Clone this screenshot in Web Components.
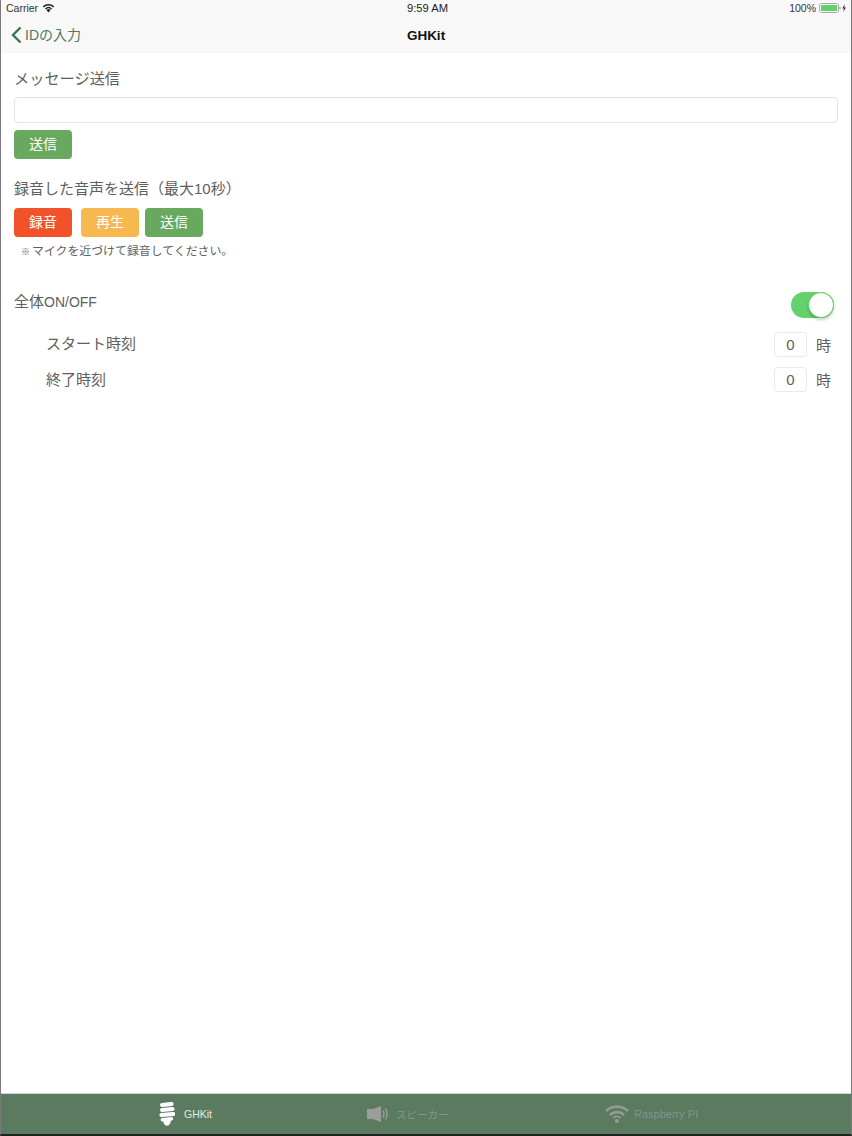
<!DOCTYPE html>
<html lang="ja">
<head>
<meta charset="utf-8">
<title>GHKit</title>
<style>
    html, body { margin: 0; padding: 0; background: #fff; }
    body { font-family: "Liberation Sans", "Noto Sans CJK JP", sans-serif; }
</style>
</head>
<body>
<app-shell>
    <nav-header back="IDの入力" title="GHKit"></nav-header>
    <section-title style="padding-top:15px">メッセージ送信</section-title>
    <text-field></text-field>
    <action-row style="margin-top:7px">
        <pill-button color="#68a85f">送信</pill-button>
    </action-row>
    <section-title style="padding-top:19px;font-size:15px">録音した音声を送信（最大10秒）</section-title>
    <action-row style="margin-top:8px">
        <pill-button color="#f2522a">録音</pill-button>
        <pill-button color="#f5b94f" style="margin-left:9px">再生</pill-button>
        <pill-button color="#68a85f" style="margin-left:6px">送信</pill-button>
    </action-row>
    <hint-text>マイクを近づけて録音してください。</hint-text>
    <switch-row><span style="font-size:15px">全体</span>ON/OFF</switch-row>
    <hour-row style="margin-top:14px;--label-lift:5px">スタート時刻</hour-row>
    <hour-row style="margin-top:10px">終了時刻</hour-row>
    <tab-bar slot="tabs"></tab-bar>
</app-shell>

<script>
class AppShell extends HTMLElement {
    constructor() {
        super();
        this.attachShadow({ mode: 'open' });
        this.shadowRoot.innerHTML = `
            <style>
                :host { display: block; width: 852px; height: 1136px; box-sizing: border-box;
                    border-left: 1px solid #77797a; border-right: 1px solid #77797a;
                    border-bottom: 2px solid #222; }
                .frame { display: flex; flex-direction: column; height: 100%; }
                .main { flex: 1; min-height: 0; }
            </style>
            <div class="frame">
                <div class="main"><slot></slot></div>
                <slot name="tabs"></slot>
            </div>
        `;
    }
}

class NavHeader extends HTMLElement {
    constructor() {
        super();
        this.attachShadow({ mode: 'open' });
    }
    connectedCallback() {
        this.shadowRoot.innerHTML = `
            <style>
                :host { display: block; background: #f8f8f8; height: 53px; color: #000; overflow: hidden; }
                .status { height: 15px; padding: 0 5px 0 5px; display: grid; grid-template-columns: 1fr auto 1fr;
                    align-items: center; font-size: 10.5px; color: #333; }
                .left, .right { display: flex; align-items: center; }
                .right { justify-content: flex-end; }
                .time { color: #222; font-size: 11.2px; margin-left: 3px; }
                .bar { display: grid; grid-template-columns: 1fr auto 1fr; align-items: center; height: 38px; padding-top: 1px; }
                .back { display: flex; align-items: center; color: #4f7a5c; font-size: 14px; padding-left: 10px; }
                .back svg { margin-right: 3px; }
                .back span { padding-bottom: 3px; }
                .title { font-size: 13.5px; font-weight: bold; color: #111; }
            </style>
            <div class="status">
                <div class="left">Carrier
                    <svg width="13" height="10" viewBox="0 0 13 10" style="margin-left:4px">
                        <path d="M6.5 9.5 L4.4 7 A3.2 3.2 0 0 1 8.6 7 Z" fill="#222"/>
                        <path d="M2.9 5.4 A5.4 5.4 0 0 1 10.1 5.4 L9.2 6.4 A4 4 0 0 0 3.8 6.4 Z" fill="#222"/>
                        <path d="M0.8 3.2 A8.4 8.4 0 0 1 12.2 3.2 L11.2 4.4 A6.8 6.8 0 0 0 1.8 4.4 Z" fill="#222"/>
                    </svg>
                </div>
                <div class="time">9:59 AM</div>
                <div class="right">100%
                    <svg width="27" height="10" viewBox="0 0 27 10" style="margin-left:3px">
                        <rect x="0.5" y="0.5" width="19" height="9" rx="2" fill="none" stroke="#aaa"/>
                        <rect x="2" y="2" width="16" height="6" fill="#5fd365"/>
                        <rect x="20.5" y="3.5" width="1" height="3" fill="#999"/>
                        <path d="M25.6 1 L23.4 5.4 H25 L24.4 9 L26.8 4.4 H25.2 Z" fill="#222"/>
                    </svg>
                </div>
            </div>
            <div class="bar">
                <div class="back">
                    <svg width="11" height="18" viewBox="0 0 11 18"><path d="M9.5 1.5 L2 9 L9.5 16.5" fill="none" stroke="#3f7350" stroke-width="2.4"/></svg>
                    <span>${this.getAttribute('back')}</span>
                </div>
                <div class="title">${this.getAttribute('title')}</div>
                <div></div>
            </div>
        `;
    }
}

class SectionTitle extends HTMLElement {
    constructor() {
        super();
        this.attachShadow({ mode: 'open' });
        this.shadowRoot.innerHTML = `
            <style>
                :host { display: block; padding-left: 13px; font-size: 15.2px; line-height: 22px; color: #606060; }
            </style>
            <slot></slot>
        `;
    }
}

class TextField extends HTMLElement {
    constructor() {
        super();
        this.attachShadow({ mode: 'open' });
        this.shadowRoot.innerHTML = `
            <style>
                :host { display: block; margin: 7px 13px 0 13px; }
                .box { height: 24px; border: 1px solid #e2e2e2; border-radius: 4px; background: #fff; }
            </style>
            <div class="box"></div>
        `;
    }
}

class ActionRow extends HTMLElement {
    constructor() {
        super();
        this.attachShadow({ mode: 'open' });
        this.shadowRoot.innerHTML = `
            <style>
                :host { display: flex; padding-left: 13px; }
            </style>
            <slot></slot>
        `;
    }
}

class PillButton extends HTMLElement {
    constructor() {
        super();
        this.attachShadow({ mode: 'open' });
    }
    connectedCallback() {
        this.shadowRoot.innerHTML = `
            <style>
                :host { display: flex; align-items: center; justify-content: center; width: 58px; height: 29px;
                    box-sizing: border-box; padding-bottom: 3px;
                    border-radius: 4px; background: ${this.getAttribute('color')}; color: #fff; font-size: 14px; }
            </style>
            <slot></slot>
        `;
    }
}

class HintText extends HTMLElement {
    constructor() {
        super();
        this.attachShadow({ mode: 'open' });
        this.shadowRoot.innerHTML = `
            <style>
                :host { display: block; height: 16px; padding: 6px 0 0 20px; font-size: 11.9px; line-height: 16px; color: #606060; }
                .mark { display: inline-block; width: 11px; font-size: 9px; color: #555; }
            </style>
            <span class="mark">※</span><slot></slot>
        `;
    }
}

class SwitchRow extends HTMLElement {
    constructor() {
        super();
        this.attachShadow({ mode: 'open' });
        this.shadowRoot.innerHTML = `
            <style>
                :host { display: flex; align-items: center; justify-content: space-between; margin-top: 33px;
                    padding: 0 17px 0 13px; height: 26px; font-size: 14px; color: #606060; }
                .label { padding-bottom: 9px; }
                .track { position: relative; width: 43px; height: 26px; border-radius: 13px; background: #63d16c; }
                .knob { position: absolute; right: 0; top: 0; width: 26px; height: 26px; box-sizing: border-box;
                    border-radius: 50%; background: #fff; border: 1px solid #63d16c; box-shadow: 0 2px 3px rgba(0,0,0,.2); }
            </style>
            <span class="label"><slot></slot></span>
            <div class="track"><div class="knob"></div></div>
        `;
    }
}

class HourRow extends HTMLElement {
    constructor() {
        super();
        this.attachShadow({ mode: 'open' });
        this.shadowRoot.innerHTML = `
            <style>
                :host { display: flex; align-items: center; justify-content: space-between;
                    padding: 0 20px 0 45px; height: 25px; font-size: 15px; color: #606060; }
                .label { padding-bottom: var(--label-lift, 2px); }
                .value { display: flex; align-items: center; gap: 9px; }
                .num { width: 33px; height: 25px; box-sizing: border-box; border: 1px solid #e9e9e9; border-radius: 4px;
                    display: flex; align-items: center; justify-content: center; font-size: 15px; }
            </style>
            <span class="label"><slot></slot></span>
            <div class="value"><div class="num">0</div><span>時</span></div>
        `;
    }
}

class TabBar extends HTMLElement {
    constructor() {
        super();
        this.attachShadow({ mode: 'open' });
        this.shadowRoot.innerHTML = `
            <style>
                :host { display: grid; grid-template-columns: 330px 273px 1fr; height: 40px; background: #5a7b60;
                    border-top: 1px solid #cfd6cf; font-size: 10.5px; color: #e4ebe5; }
                .tab { display: flex; align-items: center; justify-content: flex-start; }
                .off { color: #80968a; }
                .first { padding-left: 158px; }
                .first svg { margin-right: 9px; }
                .second { padding-left: 36px; }
                .second svg { margin-right: 6px; }
                .third { padding-left: 1px; }
                .third svg { margin-right: 5px; }
                .third span { font-size: 11px; }
            </style>
            <div class="tab first">
                <svg width="16" height="24" viewBox="0 0 16 24">
                    <path d="M3 1 L12 0 A2 2 0 0 1 13 4 L3 5 A2 2 0 0 1 3 1 Z M3 6 L13 5 A2 2 0 0 1 14 9 L3 10 A2 2 0 0 1 3 6 Z M2 11 L14 10 A2 2 0 0 1 14.5 14 L3 15 A2 2 0 0 1 2 11 Z M3 16 L13 15 A1.8 1.8 0 0 1 13 18.4 L11.5 19 V21 L9.5 23.5 H6.5 L4.5 21 V19.4 L3 19.5 A1.8 1.8 0 0 1 3 16 Z" fill="#fff"/>
                </svg>
                <span>GHKit</span>
            </div>
            <div class="tab off second">
                <svg width="23" height="16" viewBox="0 0 23 16">
                    <path d="M0 3 H6 L14 0 V16 L6 13 H0 Z" fill="#9a9e9b"/>
                    <path d="M16 4.5 Q18 8 16 11.5 M18.5 2.5 Q21.5 8 18.5 13.5" fill="none" stroke="#9a9e9b" stroke-width="1.4"/>
                </svg>
                <span>スピーカー</span>
            </div>
            <div class="tab off third">
                <svg width="24" height="18" viewBox="0 0 24 18">
                    <path d="M1 6 A16 16 0 0 1 23 6 M5 10 A10 10 0 0 1 19 10" fill="none" stroke="#949a95" stroke-width="2.6"/>
                    <path d="M8.5 13 A5 5 0 0 1 15.5 13" fill="none" stroke="#949a95" stroke-width="2"/>
                    <circle cx="12" cy="16" r="2" fill="#949a95"/>
                </svg>
                <span>Raspberry PI</span>
            </div>
        `;
    }
}

customElements.define('app-shell', AppShell);
customElements.define('nav-header', NavHeader);
customElements.define('section-title', SectionTitle);
customElements.define('text-field', TextField);
customElements.define('action-row', ActionRow);
customElements.define('pill-button', PillButton);
customElements.define('hint-text', HintText);
customElements.define('switch-row', SwitchRow);
customElements.define('hour-row', HourRow);
customElements.define('tab-bar', TabBar);
</script>
</body>
</html>
